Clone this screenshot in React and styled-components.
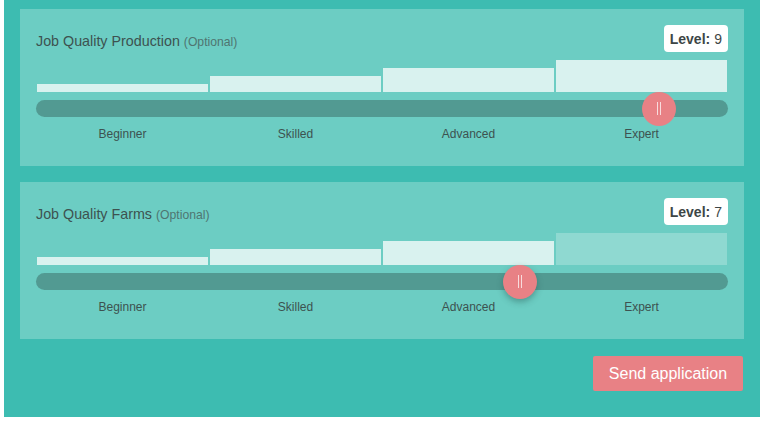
import React from "react";
import styled, { createGlobalStyle } from "styled-components";

const Global = createGlobalStyle`
  body {
    margin: 0;
    font-family: "Liberation Sans", Arial, sans-serif;
    background: #ffffff;
  }
`;

const Wrapper = styled.div`
  margin-left: 4px;
  width: 756px;
  height: 417px;
  box-sizing: border-box;
  background: #3dbcb1;
  padding: 9px 16px 0 16px;
  display: flex;
  flex-direction: column;
  gap: 16px;
`;

const Panel = styled.div`
  background: #6ccdc3;
  height: 157px;
  box-sizing: border-box;
  padding: 16px 16px 0 16px;
  display: flex;
  flex-direction: column;
`;

const Header = styled.div`
  display: flex;
  justify-content: space-between;
  align-items: center;
  height: 27px;
`;

const Title = styled.div`
  font-size: 14.3px;
  color: #3d5250;
  padding-top: 5px;
`;

const Optional = styled.span`
  font-size: 12.2px;
  color: #4f7571;
`;

const Badge = styled.div`
  background: #ffffff;
  border-radius: 4px;
  height: 27px;
  padding: 0 6px;
  display: flex;
  align-items: center;
  font-size: 14px;
  color: #3d4646;
  b {
    font-weight: 700;
    margin-right: 4px;
  }
`;

const Bars = styled.div`
  margin-top: 8px;
  height: 32px;
  display: flex;
  align-items: flex-end;
  gap: 2px;
  padding: 0 1px;
`;

const Bar = styled.div`
  flex: 1;
  height: ${(p) => p.$h}px;
  background: ${(p) => (p.$on ? "#d9f2ef" : "#8fd9d1")};
`;

const Track = styled.div`
  position: relative;
  margin-top: 8px;
  height: 17px;
  border-radius: 9px;
  background: #529a92;
`;

const Thumb = styled.div`
  position: absolute;
  top: 50%;
  width: 34px;
  height: 34px;
  margin: -17px 0 0 -17px;
  border-radius: 50%;
  background: #e88185;
  display: flex;
  align-items: center;
  justify-content: center;
  gap: 2px;
  box-shadow: ${(p) => (p.$active ? "0 3px 6px rgba(40, 90, 85, 0.45)" : "none")};
  span {
    width: 1px;
    height: 13px;
    background: #f8dcdd;
  }
`;

const Labels = styled.div`
  display: grid;
  grid-template-columns: repeat(4, 1fr);
  margin-top: 10px;
  font-size: 12px;
  color: #3d5250;
  text-align: center;
`;

const Footer = styled.div`
  display: flex;
  justify-content: flex-end;
  margin-top: 1px;
`;

const SendButton = styled.button`
  width: 150px;
  height: 35px;
  border: none;
  border-radius: 2px;
  background: #e88185;
  color: #ffffff;
  font-family: "Liberation Sans", Arial, sans-serif;
  font-size: 16px;
  margin-right: 1px;
`;

const steps = ["Beginner", "Skilled", "Advanced", "Expert"];

function LevelSlider({ title, level, active }) {
  const lit = level >= 8 ? 4 : level >= 5 ? 3 : level >= 3 ? 2 : 1;
  return (
    <Panel>
      <Header>
        <Title>
          {title} <Optional>(Optional)</Optional>
        </Title>
        <Badge>
          <b>Level:</b>
          {level}
        </Badge>
      </Header>
      <Bars>
        {steps.map((s, i) => (
          <Bar key={s} $h={(i + 1) * 8} $on={i < lit} />
        ))}
      </Bars>
      <Track>
        <Thumb $active={active} style={{ left: `${level * 10}%` }}>
          <span />
          <span />
        </Thumb>
      </Track>
      <Labels>
        {steps.map((s) => (
          <div key={s}>{s}</div>
        ))}
      </Labels>
    </Panel>
  );
}

export default function App() {
  return (
    <>
      <Global />
      <Wrapper>
        <LevelSlider title="Job Quality Production" level={9} />
        <LevelSlider title="Job Quality Farms" level={7} active />
        <Footer>
          <SendButton>Send application</SendButton>
        </Footer>
      </Wrapper>
    </>
  );
}
